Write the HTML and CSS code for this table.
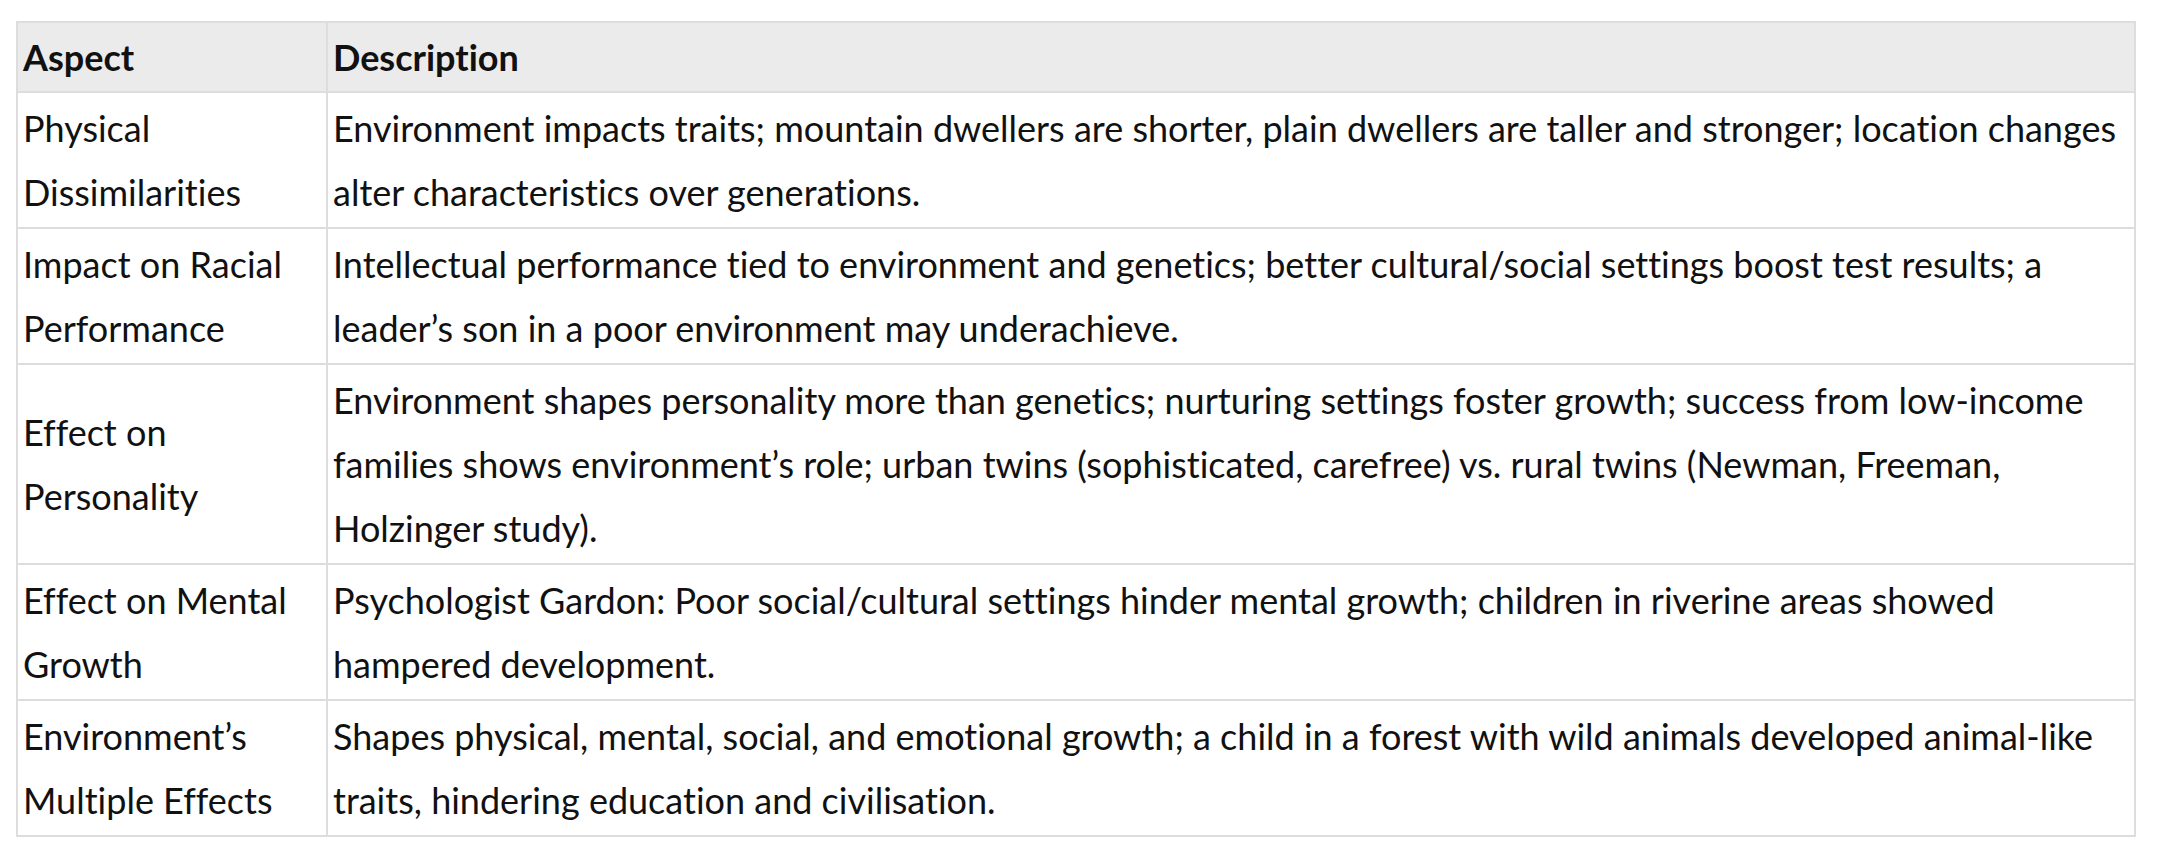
FILE: index.html
```html
<!DOCTYPE html>
<html lang="en">
<head>
<meta charset="utf-8">
<title>Environment Effects</title>
<link rel="stylesheet" href="styles.css">
</head>
<body>
<div class="wrap">
<table class="grid">
<colgroup><col class="c1"><col class="c2"></colgroup>
<thead>
<tr><th>Aspect</th><th>Description</th></tr>
</thead>
<tbody>
<tr><td>Physical Dissimilarities</td><td>Environment impacts traits; mountain dwellers are shorter, plain dwellers are taller and stronger; location changes alter characteristics over generations.</td></tr>
<tr><td>Impact on Racial Performance</td><td>Intellectual performance tied to environment and genetics; better cultural/social settings boost test results; a leader’s son in a poor environment may underachieve.</td></tr>
<tr><td>Effect on Personality</td><td>Environment shapes personality more than genetics; nurturing settings foster growth; success from low-income families shows environment’s role; urban twins (sophisticated, carefree) vs. rural twins (Newman, Freeman, Holzinger study).</td></tr>
<tr><td>Effect on Mental Growth</td><td>Psychologist Gardon: Poor social/cultural settings hinder mental growth; children in riverine areas showed hampered development.</td></tr>
<tr><td>Environment’s Multiple Effects</td><td>Shapes physical, mental, social, and emotional growth; a child in a forest with wild animals developed animal-like traits, hindering education and civilisation.</td></tr>
</tbody>
</table>
</div>
</body>
</html>
```
FILE: styles.css
```css
html, body {
  margin: 0;
  padding: 0;
  background: #ffffff;
}
.wrap {
  padding: 21px 23px 0 16px;
}
.grid {
  width: 2120px;
  border-collapse: collapse;
  table-layout: fixed;
  font-family: Lato, "Open Sans", sans-serif;
  font-size: 36px;
  line-height: 64px;
  color: #111111;
  font-variant-ligatures: none;
}
.c1 { width: 310px; }
.grid th, .grid td {
  border: 2px solid #dddddd;
  text-align: left;
  vertical-align: middle;
  padding: 3px 5px;
}
.grid th {
  background: #ebebeb;
  font-weight: 700;
  padding: 2px 5px;
}
```
